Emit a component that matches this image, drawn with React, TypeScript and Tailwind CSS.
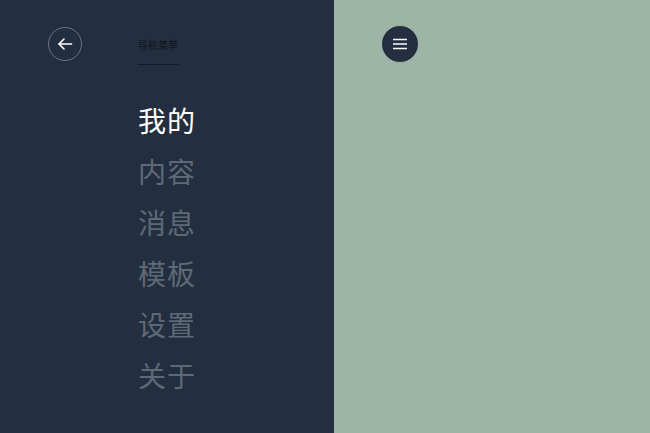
import React, { useState } from "react";

const items = ["我的", "内容", "消息", "模板", "设置", "关于"];

const App = () => {
  const [active, setActive] = useState(0);

  return (
    <div
      className="flex h-[433px] w-[650px] overflow-hidden"
      style={{ fontFamily: '"Noto Sans CJK SC", "Noto Sans", sans-serif' }}
    >
      <div className="flex h-full w-[334px] flex-col bg-[#232f40]">
        <div className="flex items-start pl-[48px] pt-[27px]">
          <button className="flex h-[34px] w-[34px] items-center justify-center rounded-full border border-[#6b7480] text-white">
            <svg width="16" height="16" viewBox="0 0 16 16" fill="none" stroke="currentColor" strokeWidth="1.6" strokeLinecap="round" strokeLinejoin="round">
              <path d="M14.5 8H2" />
              <path d="M7 3L2 8l5 5" />
            </svg>
          </button>
          <div className="ml-[56px] flex flex-col pt-[10px]">
            <span className="text-[10px] leading-[16px] font-medium text-[#121821]">导航菜单</span>
            <div className="mt-[11px] h-px w-[41px] bg-[#141b25]" />
          </div>
        </div>
        <ul className="mt-[37px] flex flex-col pl-[138px]">
          {items.map((item, i) => (
            <li
              key={item}
              onClick={() => setActive(i)}
              className={`h-[51px] cursor-pointer text-[28px] font-normal leading-[36px] tracking-[1px] ${
                i === active ? "text-white" : "text-[#5e6977]"
              }`}
            >
              {item}
            </li>
          ))}
        </ul>
      </div>
      <div className="flex-1 bg-[#9db5a6] pl-[48px] pt-[26px]">
        <button className="flex h-[36px] w-[36px] items-center justify-center rounded-full bg-[#232f40]">
          <svg width="16" height="12" viewBox="0 0 16 12" fill="none" stroke="white" strokeWidth="1.6">
            <path d="M1 1.5h14M1 6h14M1 10.5h14" />
          </svg>
        </button>
      </div>
    </div>
  );
};

export default App;
